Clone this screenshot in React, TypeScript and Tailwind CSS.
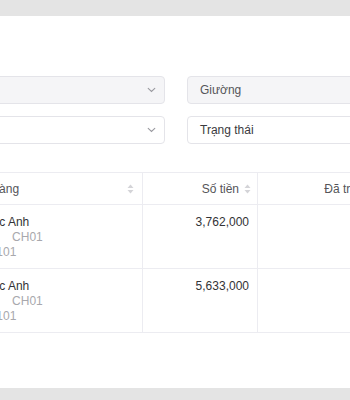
import React from 'react';

type Row = { name: string; building: string; room: string; amount: string };

const rows: Row[] = [
  { name: 'Trần Đức Anh', building: 'CH01', room: 'Phòng: 101', amount: '3,762,000' },
  { name: 'Trần Đức Anh', building: 'CH01', room: 'Phòng: 101', amount: '5,633,000' },
];

function SortIcon() {
  return (
    <svg width="7" height="10" viewBox="0 0 7 10" className="shrink-0">
      <path d="M3.5 0.5 L6.5 4 L0.5 4 Z" fill="#d4d4d8" />
      <path d="M3.5 9.5 L6.5 6 L0.5 6 Z" fill="#d4d4d8" />
    </svg>
  );
}

function Chevron() {
  return (
    <svg width="9" height="6" viewBox="0 0 9 6">
      <path d="M1.2 1.3 L4.5 4.4 L7.8 1.3" fill="none" stroke="#9a9aa0" strokeWidth="1.1" strokeLinecap="round" />
    </svg>
  );
}

export default function App() {
  return (
    <div className="w-[350px] h-[400px] overflow-hidden bg-[#e4e4e4] pt-4 font-['Liberation_Sans',Arial,sans-serif] text-[12px]">
      <div className="h-[372px] w-[520px] -ml-[60px] bg-white pt-[60px]">
        {/* filters */}
        <div className="flex gap-[22px]">
          <div className="flex flex-col gap-3 w-[225px]">
            <div className="h-7 flex items-center justify-end pr-[8px] bg-[#f5f5f7] border border-[#e4e4e9] rounded">
              <Chevron />
            </div>
            <div className="h-7 flex items-center justify-end pr-[8px] bg-white border border-[#e4e4e9] rounded">
              <Chevron />
            </div>
          </div>
          <div className="flex flex-col gap-3 w-[250px]">
            <div className="h-7 flex items-center px-3 bg-[#f5f5f7] border border-[#e4e4e9] rounded text-[#55555a]">
              Giường
            </div>
            <div className="h-7 flex items-center px-3 bg-white border border-[#e4e4e9] rounded text-[#3a3a3e]">
              Trạng thái
            </div>
          </div>
        </div>

        {/* table */}
        <div className="mt-7 border-t border-[#ececf1] w-[435px]">
          <div className="flex h-8 border-b border-[#ececf1] text-[#555559]">
            <div className="w-[203px] flex items-center justify-between pl-[15px] pr-[8px] border-r border-[#ececf1]">
              <span>Khách hàng</span>
              <SortIcon />
            </div>
            <div className="w-[115px] flex items-center justify-end gap-[5px] pr-[6px] border-r border-[#ececf1]">
              <span>Số tiền</span>
              <SortIcon />
            </div>
            <div className="flex-1 flex items-center justify-end gap-[5px] pr-[6px]">
              <span>Đã trả</span>
              <SortIcon />
            </div>
          </div>
          {rows.map((r, i) => (
            <div key={i} className="flex h-16 border-b border-[#ececf1]">
              <div className="w-[203px] pl-[15px] pt-[10px] border-r border-[#ececf1] leading-[15px]">
                <div className="text-[#333336]">{r.name}</div>
                <div className="text-[#a8a8ad]">
                  <span>Tòa nhà</span>
                  <span className="ml-[13px]">{r.building}</span>
                </div>
                <div className="text-[#a8a8ad]">{r.room}</div>
              </div>
              <div className="w-[115px] pt-[10px] pr-[8px] text-right leading-[15px] text-[#333336] border-r border-[#ececf1]">
                {r.amount}
              </div>
              <div className="flex-1" />
            </div>
          ))}
        </div>
      </div>
    </div>
  );
}
